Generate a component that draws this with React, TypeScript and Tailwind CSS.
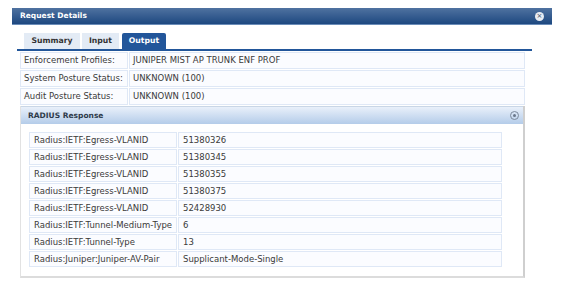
import React from "react";

const topRows = [
  { label: "Enforcement Profiles:", value: "JUNIPER MIST AP TRUNK ENF PROF" },
  { label: "System Posture Status:", value: "UNKNOWN (100)" },
  { label: "Audit Posture Status:", value: "UNKNOWN (100)" },
];

const radiusRows = [
  { attr: "Radius:IETF:Egress-VLANID", value: "51380326" },
  { attr: "Radius:IETF:Egress-VLANID", value: "51380345" },
  { attr: "Radius:IETF:Egress-VLANID", value: "51380355" },
  { attr: "Radius:IETF:Egress-VLANID", value: "51380375" },
  { attr: "Radius:IETF:Egress-VLANID", value: "52428930" },
  { attr: "Radius:IETF:Tunnel-Medium-Type", value: "6" },
  { attr: "Radius:IETF:Tunnel-Type", value: "13" },
  { attr: "Radius:Juniper:Juniper-AV-Pair", value: "Supplicant-Mode-Single" },
];

const cell =
  "flex items-center border border-[#dfe8f6] bg-[#fbfcff] px-[3px] whitespace-nowrap";

export default function App() {
  return (
    <div
      className="w-[578px] h-[292px] bg-white pt-[8px] pl-[12px] text-[#3a3a3a] text-[8.5px]"
      style={{ fontFamily: '"DejaVu Sans", Verdana, sans-serif' }}
    >
      <div className="w-[540px]">
        {/* title bar */}
        <div className="h-[17px] flex items-center justify-between px-[8px] bg-gradient-to-b from-[#4f72a0] to-[#1d4880] border-b border-[#6a8cb8]">
          <span className="text-white font-bold text-[7.5px]">Request Details</span>
          <span className="w-[9px] h-[9px] rounded-full bg-[#e8ecf2] flex items-center justify-center text-[#3a4b66] text-[7px] leading-none">
            ×
          </span>
        </div>

        {/* tabs */}
        <div className="ml-[5px] mt-[8px] w-[515px] border-b-[2px] border-[#22569a] flex items-end pl-[7px] gap-[2px]">
          <div className="h-[16px] w-[56px] flex items-center justify-center bg-[#e3ebf5] font-bold text-[7.7px] text-[#333]">
            Summary
          </div>
          <div className="h-[16px] w-[37px] flex items-center justify-center bg-[#e3ebf5] font-bold text-[7.7px] text-[#333]">
            Input
          </div>
          <div className="h-[16px] w-[44px] ml-[1px] flex items-center justify-center bg-[#22569a] rounded-t-[2px] font-bold text-[7.7px] text-white">
            Output
          </div>
        </div>

        {/* summary table */}
        <div className="ml-[8px] mt-[1px] w-[505px] flex flex-col gap-[1px]">
          {topRows.map((r) => (
            <div key={r.label} className="flex gap-[1px]">
              <div className={`${cell} h-[17px] w-[108px]`}>{r.label}</div>
              <div className={`${cell} h-[17px] flex-1`}>{r.value}</div>
            </div>
          ))}
        </div>

        {/* radius panel */}
        <div className="ml-[8px] mt-[1px] w-[505px] border-l border-[#e2e2e2] border-r-[2px] border-r-[#cfcfcf] border-b-[2px] border-b-[#dcdcdc]">
          <div className="h-[18px] flex items-center justify-between pl-[7px] pr-[4px] bg-gradient-to-b from-[#e9f0fa] to-[#b4cce9] border-t border-[#c9d6e6]">
            <span className="font-bold text-[7.5px] text-[#2e3a4a]">RADIUS Response</span>
            <span className="w-[9px] h-[9px] rounded-full border border-[#7d8a9c] flex items-center justify-center">
              <span className="w-[3px] h-[3px] rounded-full bg-[#6a778a]" />
            </span>
          </div>
          <div className="pl-[8px] pt-[8px] pb-[9px]">
            <div className="w-[473px] flex flex-col gap-[1px]">
              {radiusRows.map((r, i) => (
                <div key={i} className="flex gap-[1px]">
                  <div className={`${cell} h-[16px] w-[148px] pl-[4px]`}>{r.attr}</div>
                  <div className={`${cell} h-[16px] flex-1 pl-[4px]`}>{r.value}</div>
                </div>
              ))}
            </div>
          </div>
        </div>
      </div>
    </div>
  );
}
